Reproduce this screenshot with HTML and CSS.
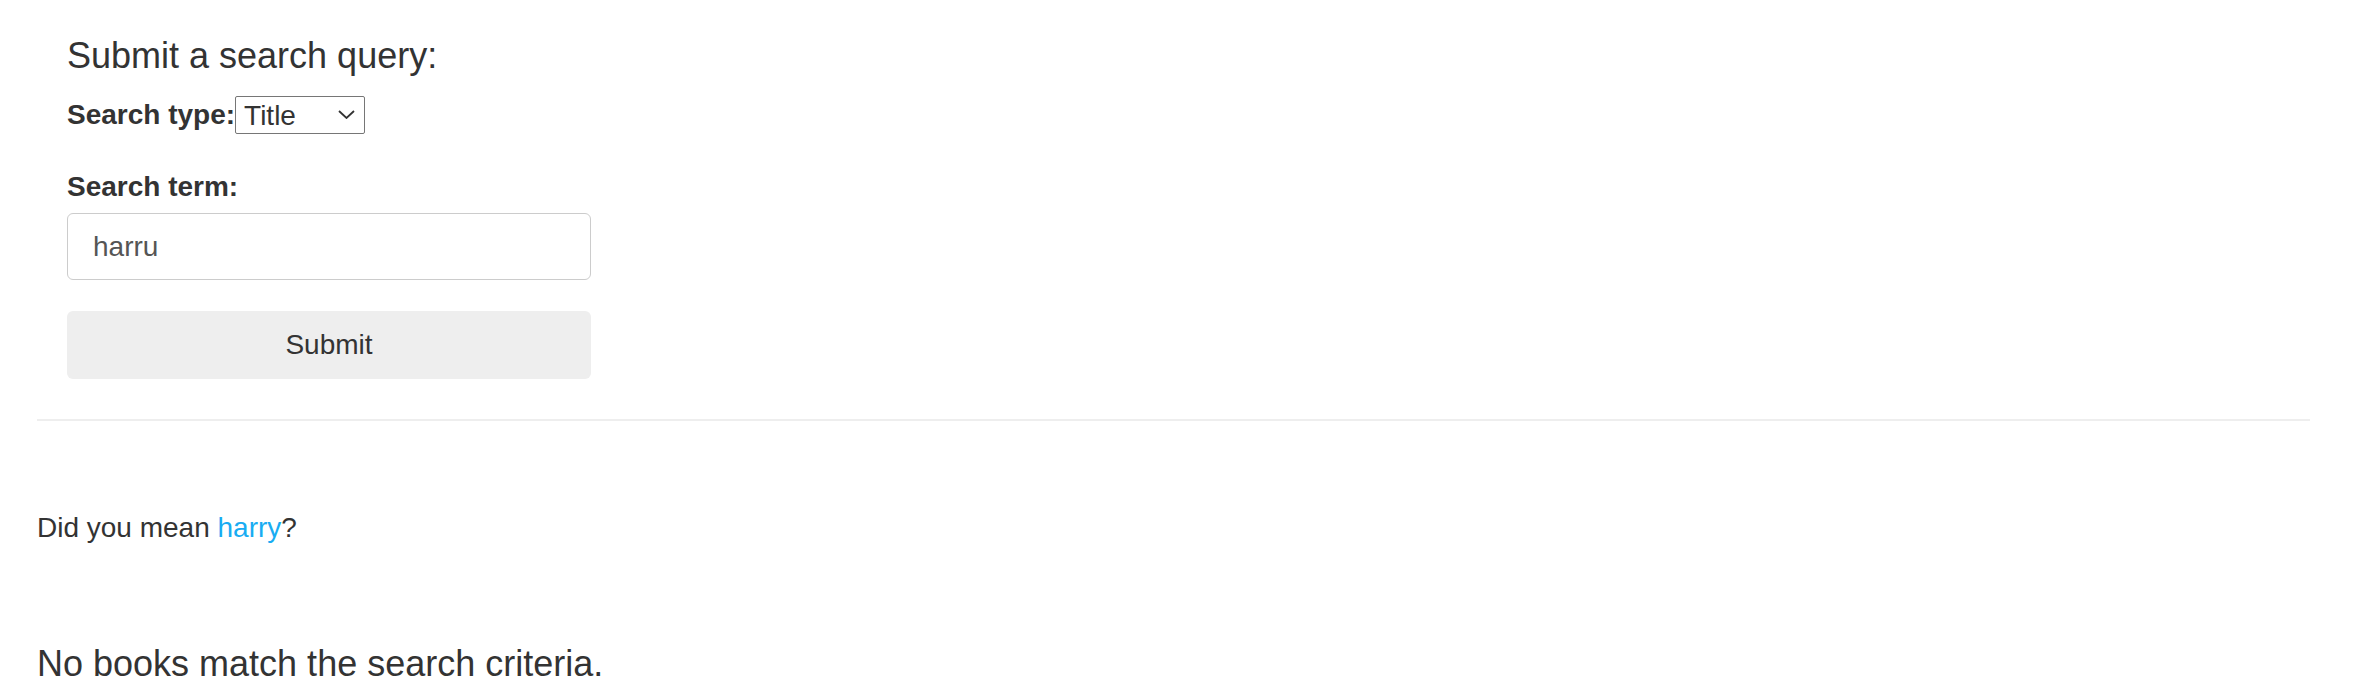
FILE: index.html
```html
<!DOCTYPE html>
<html lang="en">
<head>
<meta charset="utf-8">
<title>Book search</title>
<link rel="stylesheet" href="styles.css">
</head>
<body>
<div class="page">
  <form class="search-form">
    <h3 class="title">Submit a search query:</h3>
    <div class="type-row">
      <label class="type-label" for="type">Search type:</label>
      <span class="select-wrap">
        <select id="type" class="type-select">
          <option>Title</option>
          <option>Author</option>
        </select>
        <svg class="chevron" width="17" height="9" viewBox="0 0 17 9"><polyline points="1,1 8.5,8 16,1" fill="none" stroke="#333" stroke-width="1.8"/></svg>
      </span>
    </div>
    <label class="term-label" for="term">Search term:</label>
    <input id="term" class="term-input" type="text" value="harru">
    <button type="button" class="submit">Submit</button>
  </form>
  <hr class="divider">
  <p class="suggest">Did you mean <a class="suggest-link" href="#">harry</a>?</p>
  <h3 class="no-results">No books match the search criteria.</h3>
</div>
</body>
</html>
```

FILE: styles.css
```css
* { box-sizing: border-box; }

html, body {
  margin: 0;
  background: #fff;
}

body {
  font-family: "Liberation Sans", Arial, sans-serif;
  font-size: 28px;
  color: #333;
}

.page {
  padding: 36px 47px 0 37px;
}

.search-form {
  padding-left: 30px;
  width: 554px;
}

.title {
  margin: 0 0 20px;
  font-size: 36px;
  line-height: 40px;
  font-weight: 400;
}

.type-row {
  display: flex;
  align-items: center;
  gap: 0;
  margin-bottom: 34px;
}

.type-label {
  font-weight: 700;
  line-height: 38px;
}

.select-wrap {
  position: relative;
  display: inline-block;
}

.type-select {
  -webkit-appearance: none;
  appearance: none;
  display: block;
  width: 130px;
  height: 38px;
  margin: 0;
  padding: 0 0 0 8px;
  border: 1.5px solid #767676;
  border-radius: 2px;
  background: #fff;
  font-family: inherit;
  font-size: 28px;
  color: #333;
}

.chevron {
  position: absolute;
  right: 10px;
  top: 14px;
  pointer-events: none;
}

.term-label {
  display: block;
  font-weight: 700;
  line-height: 38px;
  margin-bottom: 7px;
}

.term-input {
  display: block;
  width: 524px;
  height: 67px;
  margin: 0 0 31px;
  padding: 0 0 0 25px;
  border: 1.5px solid #ccc;
  border-radius: 6px;
  font-family: inherit;
  font-size: 28px;
  color: #555;
  background: #fff;
}

.submit {
  display: block;
  width: 524px;
  height: 68px;
  margin: 0;
  padding: 0;
  border: 0;
  border-radius: 6px;
  background: #eee;
  font-family: inherit;
  font-size: 28px;
  color: #333;
}

.divider {
  margin: 40px 0 0;
  border: 0;
  height: 2px;
  background: #eee;
}

.suggest {
  margin: 88px 0 0;
  line-height: 38px;
}

.suggest-link {
  color: #18acf2;
  text-decoration: none;
}

.no-results {
  margin: 97px 0 0;
  font-size: 36px;
  line-height: 40px;
  font-weight: 400;
}
```
